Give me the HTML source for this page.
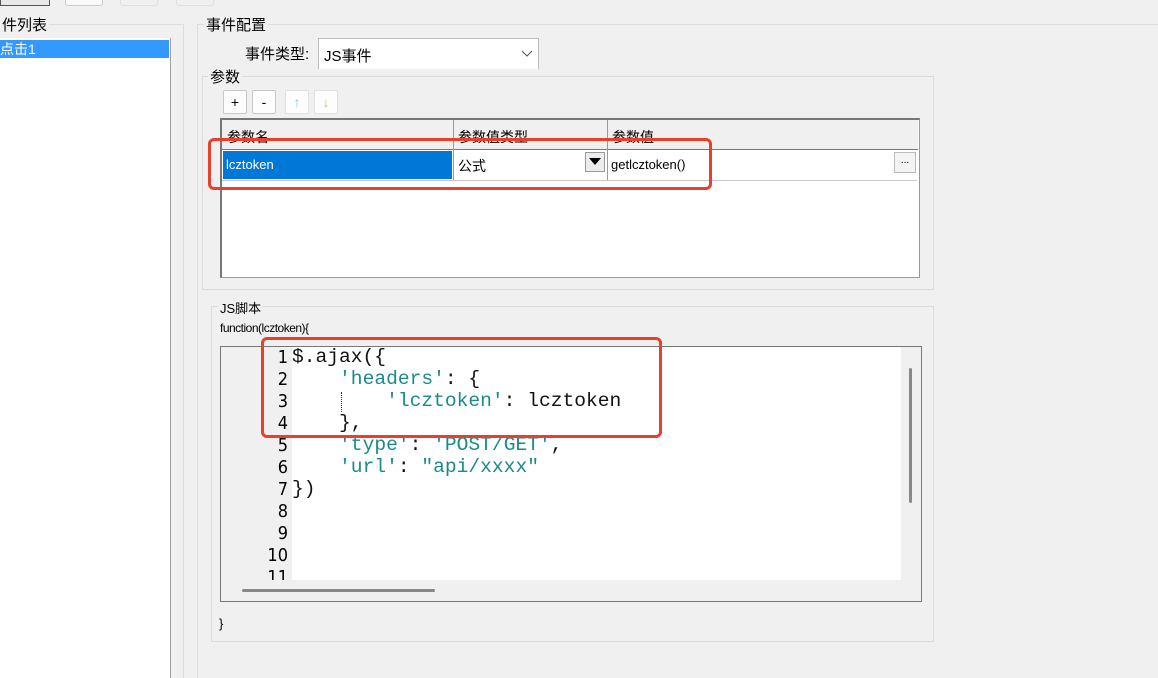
<!DOCTYPE html><html style="height:678px;overflow:hidden"><head><meta charset="utf-8"><style>
body{margin:0;width:1158px;height:678px;background:#f0f0f0;position:relative;overflow:hidden;font-family:"Liberation Sans","Noto Sans CJK SC",sans-serif;font-size:14px;color:#000}
.a{position:absolute}
.fs{position:absolute;border:1px solid #dcdcdc}
.lg{position:absolute;background:#f0f0f0;padding:0 2px}
.btn{position:absolute;width:22px;height:22px;border:1px solid #c8c8c8;background:#fdfdfd;border-radius:2px;text-align:center;line-height:22px;font-size:14px}
.code{position:absolute;font-family:"Liberation Mono",monospace;font-size:19.6px;line-height:22px;white-space:pre;color:#111}
.s{color:#1a8a8a}
</style></head><body>
<div class="a" style="left:0;top:-6px;width:48px;height:10px;border:1px solid #555;background:#e8e8e8"></div>
<div class="a" style="left:65px;top:-6px;width:36px;height:10px;border:1px solid #ccc;border-radius:3px;background:#fafafa"></div>
<div class="a" style="left:120px;top:-6px;width:36px;height:10px;border:1px solid #e0e0e0;border-radius:3px"></div>
<div class="a" style="left:176px;top:-6px;width:36px;height:10px;border:1px solid #e0e0e0;border-radius:3px"></div>

<div class="fs" style="left:-5px;top:24px;width:187px;height:660px"></div>
<div class="lg" style="left:0;top:14px;font-size:15px">件列表</div>
<div class="a" style="left:0;top:38px;width:170px;height:650px;background:#fff;border-right:1px solid #a0a0a0"></div>
<div class="a" style="left:0;top:40px;width:169px;height:18px;background:#3399ff;color:#fff;line-height:18px;font-size:14px">点击1</div>

<div class="fs" style="left:197px;top:24px;width:980px;height:660px"></div>
<div class="lg" style="left:204px;top:14px;font-size:15px">事件配置</div>
<div class="a" style="left:245px;top:43px;font-size:15px">事件类型:</div>
<div class="a" style="left:318px;top:38px;width:219px;height:30px;background:#fff;border:1px solid #bbb;border-bottom:none"></div>
<div class="a" style="left:324px;top:45px;font-size:15px">JS事件</div>
<svg class="a" style="left:521px;top:50px" width="12" height="8"><path d="M1 1L6 6L11 1" fill="none" stroke="#555" stroke-width="1"/></svg>

<div class="fs" style="left:202px;top:76px;width:730px;height:212px"></div>
<div class="lg" style="left:208px;top:66px;font-size:15px">参数</div>
<div class="btn" style="left:223px;top:90px">+</div>
<div class="btn" style="left:252px;top:90px">-</div>
<div class="btn" style="left:285px;top:90px;border-color:#e0e0e0;color:#9cc4e8">↑</div>
<div class="btn" style="left:314px;top:90px;border-color:#e0e0e0;color:#d8c070">↓</div>

<div class="a" style="left:220px;top:118px;width:700px;height:160px;background:#fff;border:1px solid #999;border-top:2px solid #777;border-left:2px solid #777;box-sizing:border-box"></div>
<div class="a" style="left:222px;top:120px;width:696px;height:29px;background:#f0f0f0;border-bottom:1px solid #777;overflow:hidden">
<div class="a" style="left:5px;top:7px">参数名</div>
<div class="a" style="left:236px;top:7px">参数值类型</div>
<div class="a" style="left:390px;top:7px">参数值</div>
</div>
<div class="a" style="left:453px;top:120px;width:1px;height:60px;background:#999"></div>
<div class="a" style="left:607px;top:120px;width:1px;height:60px;background:#999"></div>
<div class="a" style="left:222px;top:180px;width:695px;height:1px;background:#c8c8c8"></div>
<div class="a" style="left:223px;top:151px;width:229px;height:28px;background:#0078d7;color:#fff;line-height:28px;padding-left:3px;box-sizing:border-box;font-size:13px">lcztoken</div>
<div class="a" style="left:458px;top:156px;font-size:14px">公式</div>
<div class="a" style="left:585px;top:152px;width:20px;height:20px;background:#ececec;border:1px solid #999;box-sizing:border-box"></div>
<svg class="a" style="left:589px;top:158px" width="12" height="7"><path d="M0 0H12L6 7Z" fill="#000"/></svg>
<div class="a" style="left:611px;top:157px;font-size:13px">getlcztoken()</div>
<div class="a" style="left:894px;top:152px;width:22px;height:21px;background:#f4f4f4;border:1px solid #bbb;box-sizing:border-box;font-size:10px;text-align:center;line-height:16px">...</div>
<div class="a" style="left:208px;top:138px;width:498px;height:46px;border:3px solid #e8402a;border-radius:6px"></div>

<div class="fs" style="left:211px;top:306px;width:721px;height:334px"></div>
<div class="lg" style="left:218px;top:298px;font-size:13px">JS脚本</div>
<div class="a" style="left:220px;top:321px;font-size:12px;letter-spacing:-0.5px">function(lcztoken){</div>
<div class="a" style="left:220px;top:346px;width:702px;height:256px;border:1px solid #777;box-sizing:border-box;background:#f0f0f0"></div>
<div class="a" style="left:292px;top:347px;width:609px;height:233px;background:#fff"></div>
<div class="a" style="left:221px;top:347px;width:71px;height:233px;overflow:hidden">
<div class="a" style="left:0;top:0;width:67px;text-align:right;font-family:'DejaVu Sans Condensed','Liberation Sans',sans-serif;font-size:18px;line-height:22px;white-space:pre">1
2
3
4
5
6
7
8
9
10
11</div></div>
<div class="a" style="left:341px;top:392px;height:20px;border-left:1px dotted #333"></div>
<div class="code" style="left:292px;top:346px">$.ajax({
    <span class="s">'headers'</span>: {
        <span class="s">'lcztoken'</span>: lcztoken
    },
    <span class="s">'type'</span>: <span class="s">'POST/GET'</span>,
    <span class="s">'url'</span>: <span class="s">"api/xxxx"</span>
})</div>
<div class="a" style="left:909px;top:368px;width:3px;height:135px;background:#888;border-radius:2px"></div>
<div class="a" style="left:242px;top:589px;width:193px;height:3px;background:#888;border-radius:2px"></div>
<div class="a" style="left:261px;top:337px;width:395px;height:95px;border:3px solid #e8402a;border-radius:6px"></div>
<div class="a" style="left:219px;top:616px;font-size:13px">}</div>
</body></html>
